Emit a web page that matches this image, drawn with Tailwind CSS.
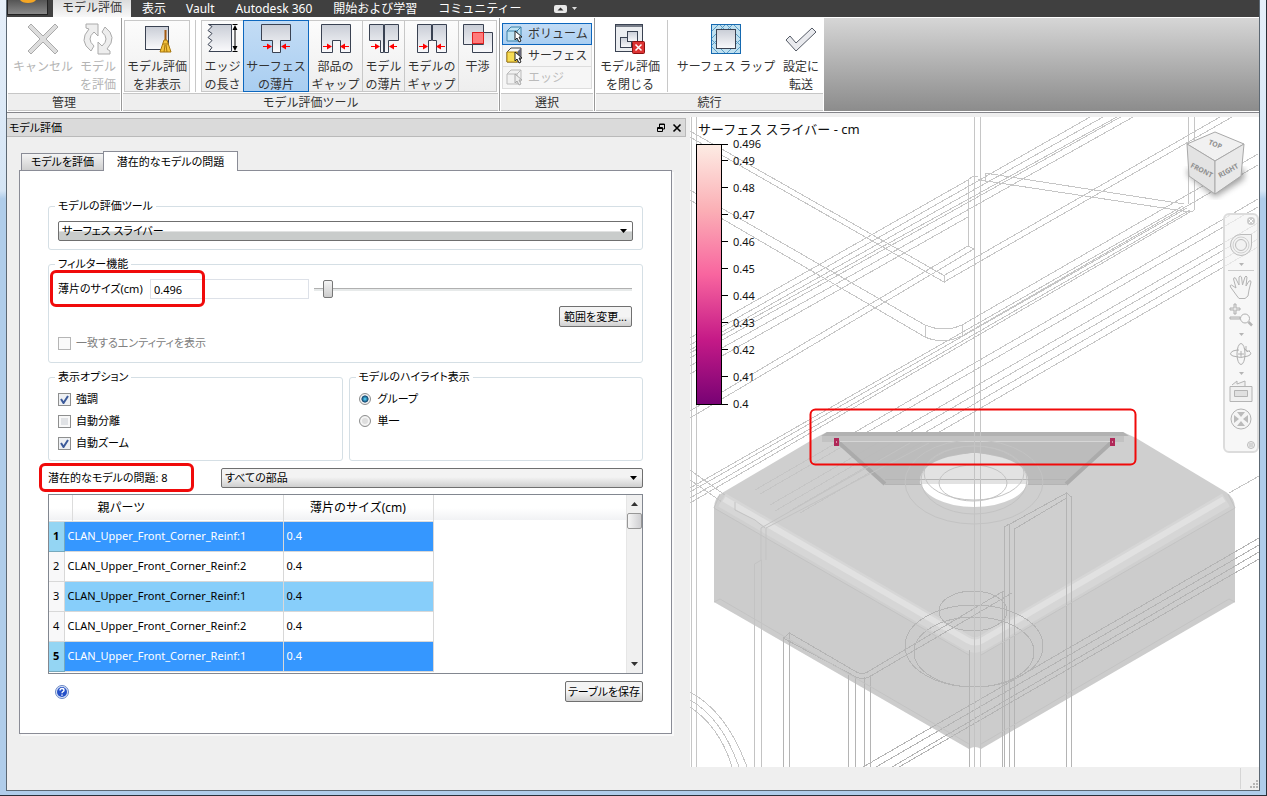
<!DOCTYPE html>
<html lang="ja">
<head>
    <meta charset="UTF-8">
    <meta name="viewport" content="width=device-width, initial-scale=1.0">
    <title>モデル評価</title>
    <script src="https://cdn.jsdelivr.net/npm/@tailwindcss/browser@4"></script>
</head>
<body class="h-screen overflow-hidden font-['Noto_Sans','Noto_Sans_CJK_JP',sans-serif] text-xs text-black">
<div class="flex h-screen border-r border-b border-[#2a2f38] bg-linear-to-b from-[#e6eff9] from-0% via-[#d5e5f5] via-24% to-[#b0cdea] to-25% pr-[6px] pb-[4px] pl-[6px]">
<div class="flex min-w-0 flex-1 flex-col border-x border-b border-[#5c6873] bg-[#efefef]">

    <!-- メニュー -->
    <nav class="flex h-[17px] shrink-0 items-center bg-[#404040] leading-4 text-white">
        <button aria-label="アプリケーション メニュー" class="flex h-[15px] w-[41px] justify-center self-start border border-t-0 border-[#222] bg-linear-to-b from-[#555] to-[#8a8a8a]">
            <svg width="18" height="3" viewBox="0 0 18 3"><path d="M1 0h16q-2 3-8 3T1 0z" fill="#f5a623"/></svg>
        </button>
        <a href="#" class="ml-[5px] h-[17px] w-[78px] bg-linear-to-b from-[#dcdcdc] to-[#f8f8f8] text-center text-[#333]">モデル評価</a>
        <a href="#" class="ml-[11px]">表示</a>
        <a href="#" class="ml-5">Vault</a>
        <a href="#" class="ml-[21px]">Autodesk 360</a>
        <a href="#" class="ml-[21px]">開始および学習</a>
        <a href="#" class="ml-[21px]">コミュニティー</a>
        <button aria-label="リボンを最小化" class="ml-8 flex items-center gap-[5px]">
            <svg width="13" height="8" viewBox="0 0 13 8"><rect width="13" height="8" rx="2" fill="#e8e8e8"/><path d="M3.500 5.500h6l-3-3z" fill="#333"/></svg>
            <svg width="5" height="3" viewBox="0 0 5 3"><path d="M0 0h5L2.500 3z" fill="#ddd"/></svg>
        </button>
    </nav>

    <!-- リボン -->
    <div class="flex h-[96px] shrink-0 border-t border-b border-t-white border-b-[#85858a] bg-white pb-px leading-[18px] text-[#333]">
        <section class="flex w-[115px] flex-col border-r border-[#999] pr-px pl-px">
            <div class="flex h-[75px] shrink-0 pt-[2px] text-[#b4b4b4]">
                <button disabled class="flex w-[70px] flex-col items-center pt-[3px]">
                    <svg class="mb-[3px] h-8 w-8 shrink-0" viewBox="0 0 32 32"><path d="M4 1l12 12L28 1l3 3-12 12 12 12-3 3-12-12L4 31l-3-3 12-12L1 4z" fill="#ddd" stroke="#aaa" stroke-linejoin="round"/></svg>
                    キャンセル
                </button>
                <button disabled class="flex w-[40px] flex-col items-center pt-[3px]">
                    <svg class="mb-[3px] h-8 w-8 shrink-0" viewBox="0 0 32 32"><path d="M4 1h12v12l-4-4q-8 7 0 14l-3 5Q-4 18 7 6L4 5zM28 31H16V19l4 4q8-7 0-14l3-5q13 10 2 22l3 2z" fill="#eee" stroke="#aaa" stroke-linejoin="round"/></svg>
                    <span>モデル<br>を評価</span>
                </button>
            </div>
            <h2 class="h-[18px] border-y border-[#c6c6c6] bg-[#eee] text-center">管理</h2>
        </section>
        <section class="flex w-[378px] flex-col border-r border-[#999] px-px">
            <div class="flex h-[75px] shrink-0 pt-[2px] pb-px">
                <button class="ml-px flex w-[66px] flex-col items-center border border-[#c8c8c8] bg-linear-to-b from-[#fcfcfc] to-[#eee] pt-[2px]">
                    <svg class="mb-[3px] h-8 w-8 shrink-0" viewBox="0 0 32 32"><defs><linearGradient id="g" x1="0" y1="0" x2="0" y2="1"><stop stop-color="#c9cdd6"/><stop offset="1" stop-color="#fafafc"/></linearGradient></defs><rect x="4.500" y="3.500" width="23" height="23" fill="url(#g)" stroke="#3a4252"/><path d="M23.500 7h2v11h-2z" fill="#a55a10"/><path d="M23 17h3l4 12H19z" fill="#f4c23a" stroke="#a6750d"/><path d="M22 21h5M23 29l1-7M26 29l-1-7" stroke="#a6750d" fill="none"/></svg>
                    <span>モデル評価<br>を非表示</span>
                </button>
                <div class="mr-[5px] ml-[5px] w-px bg-[#c8c8c8]"></div>
                <button class="flex w-[42px] flex-col items-center border border-r-0 border-[#c8c8c8] bg-linear-to-b from-[#fcfcfc] to-[#eee] pt-[2px]">
                    <svg class="mb-[3px] h-8 w-8 shrink-0" viewBox="0 0 32 32"><path d="M1.500 1.500h23v27H2l3-4-4-3 4-4-4-3 4-4-4-3 4-4z" fill="url(#g)" stroke="#3a4252"/><path d="M25.500 1.500h5M25.500 28.500h5M28 4v22" stroke="#000" fill="none"/><path d="M25.500 7L28 2l2.500 5zM25.500 23l2.500 5 2.500-5z"/></svg>
                    <span>エッジ<br>の長さ</span>
                </button>
                <button class="flex w-[66px] flex-col items-center border border-[#0d67be] bg-linear-to-b from-[#c3dcf5] to-[#a9cef1] pt-[2px]">
                    <svg class="mb-[3px] h-8 w-8 shrink-0" viewBox="0 0 32 32"><path d="M1.500 1.500h29v16h-10v12h-8v-12h-11z" fill="url(#g)" stroke="#3a4252" stroke-linejoin="round"/><path d="M3 23.500h6M30 23.500h-6" stroke="#f00"/><path d="M7 20.500l5 3-5 3zM26 20.500l-5 3 5 3z" fill="#f00"/></svg>
                    <span>サーフェス<br>の薄片</span>
                </button>
                <button class="flex w-[54px] flex-col items-center border border-l-0 border-[#c8c8c8] bg-linear-to-b from-[#fcfcfc] to-[#eee] pt-[2px]">
                    <svg class="mb-[3px] h-8 w-8 shrink-0" viewBox="0 0 32 32"><path d="M1.500 1.500h29v28h-10v-12h-8v12h-11z" fill="url(#g)" stroke="#3a4252" stroke-linejoin="round"/><path d="M3 23.500h6M29 23.500h-6" stroke="#f00"/><path d="M7 20.500l5 3-5 3zM25 20.500l-5 3 5 3z" fill="#f00"/></svg>
                    <span>部品の<br>ギャップ</span>
                </button>
                <button class="flex w-[42px] flex-col items-center border border-l-0 border-[#c8c8c8] bg-linear-to-b from-[#fcfcfc] to-[#eee] pt-[2px]">
                    <svg class="mb-[3px] h-8 w-8 shrink-0" viewBox="0 0 32 32"><path d="M1.500 1.500h14v28h-3v-12h-11zM16.500 1.500h14v16h-10v12h-4z" fill="url(#g)" stroke="#3a4252" stroke-linejoin="round"/><path d="M3 23.500h6M29 23.500h-6" stroke="#f00"/><path d="M7 20.500l5 3-5 3zM26 20.500l-5 3 5 3z" fill="#f00"/></svg>
                    <span>モデル<br>の薄片</span>
                </button>
                <button class="flex w-[54px] flex-col items-center border border-l-0 border-[#c8c8c8] bg-linear-to-b from-[#fcfcfc] to-[#eee] pt-[2px]">
                    <svg class="mb-[3px] h-8 w-8 shrink-0" viewBox="0 0 32 32"><path d="M1.500 1.500h14v16h-3v12h-11zM16.500 1.500h14v28h-10v-12h-4z" fill="url(#g)" stroke="#3a4252" stroke-linejoin="round"/><path d="M3 23.500h6M29 23.500h-6" stroke="#f00"/><path d="M7 20.500l5 3-5 3zM25 20.500l-5 3 5 3z" fill="#f00"/></svg>
                    <span>モデルの<br>ギャップ</span>
                </button>
                <button class="flex w-[38px] flex-col items-center border border-l-0 border-[#c8c8c8] bg-linear-to-b from-[#fcfcfc] to-[#eee] pt-[2px]">
                    <svg class="mb-[3px] h-8 w-8 shrink-0" viewBox="0 0 32 32"><path d="M1.500 1.500h20v20h-20zM10.500 9.500h20v20h-20z" fill="url(#g)" stroke="#3a4252"/><path d="M10.500 9.500h11v11h-11z" fill="#ff7b7b" stroke="#e02020"/></svg>
                    干渉
                </button>
            </div>
            <h2 class="h-[18px] border-y border-[#c6c6c6] bg-[#eee] text-center">モデル評価ツール</h2>
        </section>
        <section class="flex w-[95px] flex-col border-r border-[#999] px-px">
            <div class="flex h-[75px] shrink-0 flex-col pt-[5px] pr-px pl-px">
                <button class="flex h-[22px] items-center gap-[5px] border border-[#0d67be] bg-linear-to-b from-[#c3dcf5] to-[#a9cef1] pl-[3px]">
                    <svg width="17" height="17" viewBox="0 0 17 17"><path d="M1 5l4-4h10v11l-3 3H1z" fill="#bfe3f3" stroke="#3a80a8"/><path d="M1 5h10v10M11 5l4-4" stroke="#3a80a8" fill="none"/><path d="M9 5v9l2-2 2 4 2-1-2-4h3z" fill="#fff" stroke="#222"/></svg>
                    ボリューム
                </button>
                <button class="flex h-[22px] items-center gap-[5px] border border-t-0 border-[#ddd] bg-[#f6f6f6] pl-[3px]">
                    <svg width="17" height="17" viewBox="0 0 17 17"><path d="M1 5l4-4h10v11l-3 3H1z" fill="#f7f7f7" stroke="#444"/><path d="M11 5l4-4v10l-4 4z" fill="#667"/><path d="M1 5h10v10H1z" fill="#f6dc55" stroke="#b58a10"/><path d="M9 5v9l2-2 2 4 2-1-2-4h3z" fill="#fff" stroke="#222"/></svg>
                    サーフェス
                </button>
                <button disabled class="flex h-[22px] items-center gap-[5px] border border-t-0 border-[#ddd] bg-[#f6f6f6] pl-[3px] text-[#bbb]">
                    <svg width="17" height="17" viewBox="0 0 17 17" stroke="#bbb"><path d="M1 5l4-4h10v11l-3 3H1z" fill="#f1f1f1"/><path d="M1 5h10v10M11 5l4-4" fill="none"/><path d="M9 5v9l2-2 2 4 2-1-2-4h3z" fill="#eee" stroke="#aaa"/></svg>
                    エッジ
                </button>
            </div>
            <h2 class="h-[18px] border-y border-[#c6c6c6] bg-[#eee] text-center">選択</h2>
        </section>
        <section class="flex w-[229px] flex-col px-px">
            <div class="flex h-[75px] shrink-0 pt-[2px] pb-px">
                <button class="flex w-[68px] flex-col items-center pt-[3px]">
                    <svg class="mb-[3px] h-8 w-8 shrink-0" viewBox="0 0 32 32"><rect x="1.500" y="1.500" width="27" height="27" fill="#eceef1" stroke="#3a4252"/><path d="M2 2h26v2H2z" fill="#777d88"/><rect x="6.500" y="14.500" width="11" height="10" fill="url(#g)" stroke="#3a4252"/><rect x="13.500" y="8.500" width="10" height="10" fill="url(#g)" stroke="#3a4252"/><rect x="18.500" y="18.500" width="12" height="12" rx="1" fill="#d33" stroke="#8b1010"/><path d="M21.500 21.500l6 6M27.500 21.500l-6 6" stroke="#fff" stroke-width="1.500"/></svg>
                    <span>モデル評価<br>を閉じる</span>
                </button>
                <div class="ml-[3px] w-px bg-[#c8c8c8]"></div>
                <button class="ml-[7px] flex w-[102px] flex-col items-center pt-[3px]">
                    <svg class="mb-[3px] h-8 w-8 shrink-0" viewBox="0 0 32 32"><rect x="1" y="1" width="30" height="30" fill="#bfe0f0"/><path d="M1 9l8-8 22 22-8 8M9 31l-8-8L23 1l8 8M1 16L16 1l15 15-15 15z" stroke="#5a9cc5" fill="none"/><rect x="1.500" y="1.500" width="29" height="29" fill="none" stroke="#1569b0"/><rect x="6.500" y="6.500" width="19" height="19" fill="url(#g)" stroke="#3a4252"/></svg>
                    サーフェス ラップ
                </button>
                <button class="ml-1 flex w-[40px] flex-col items-center pt-[3px]">
                    <svg class="mb-[3px] h-8 w-8 shrink-0" viewBox="0 0 32 32"><path d="M1 17l4-4 6 7L27 5l4 4-20 19z" fill="#e9eaee" stroke="#555b66" stroke-linejoin="round"/></svg>
                    <span>設定に<br>転送</span>
                </button>
            </div>
            <h2 class="h-[18px] border-y border-[#c6c6c6] bg-[#eee] text-center">続行</h2>
        </section>
        <div class="flex-1 bg-linear-to-b from-[#d6d6d6] to-[#8c8c8c]"></div>
    </div>

    <div class="flex min-h-0 flex-1">
        <!-- モデル評価パネル -->
        <aside class="w-[683px] shrink-0 pt-[5px] pr-1 text-[11px] [font-feature-settings:'palt']">
            <header class="flex h-[19px] items-center border border-l-0 border-[#b9b9b9] bg-[#dadada] pr-[3px] pl-[2px] leading-4">
                <h1 class="flex-1">モデル評価</h1>
                <button aria-label="フロート" class="mr-[6px]"><svg width="10" height="10" viewBox="0 0 10 10" fill="none" stroke="#000"><path d="M3.500 4V1h5v5H6M3 1.500h6M1.500 4.500h5v4h-5zM1 5.500h6"/></svg></button>
                <button aria-label="閉じる"><svg width="10" height="10" viewBox="0 0 10 10"><path d="M1.500 1.500l7 7M8.500 1.500l-7 7" stroke="#000" stroke-width="1.600"/></svg></button>
            </header>
            <div class="pt-[14px] pr-[14px] pl-[12px]">
                <div role="tablist" class="flex items-end pl-[2px] leading-4">
                    <button role="tab" aria-selected="false" class="h-[17px] w-[82px] border border-r-0 border-b-0 border-[#8a8c96] bg-linear-to-b from-[#f4f4f4] to-[#cfcfcf]">モデルを評価</button>
                    <button role="tab" aria-selected="true" class="relative -mb-px h-5 w-[135px] border border-b-0 border-[#8a8c96] bg-white">潜在的なモデルの問題</button>
                </div>
                <div class="border border-[#8a8c96] bg-white px-[28px] pt-[27px] pb-[31px] shadow-[2px_2px_0_#f9f9f9]">
                    <fieldset class="rounded-[3px] border border-[#d5dfe5] px-[9px] pt-[7px] pb-2">
                        <legend class="-ml-[3px] px-[3px] leading-4"><label for="tool">モデルの評価ツール</label></legend>
                        <div class="relative">
                            <select id="tool" class="block h-5 w-full appearance-none rounded-xs border border-[#6f6f6f] bg-linear-to-b from-white from-50% to-[#c9cccb] to-55% pl-[3px] leading-4"><option>サーフェス スライバー</option></select>
                            <svg class="pointer-events-none absolute top-2 right-[6px]" width="7" height="4" viewBox="0 0 7 4"><path d="M0 0h7L3.500 4z"/></svg>
                        </div>
                    </fieldset>
                    <fieldset class="mt-[6px] rounded-[3px] border border-[#d5dfe5] pt-[7px] pr-[10px] pb-[11px] pl-[9px]">
                        <legend class="-ml-[3px] px-[3px] leading-4">フィルター機能</legend>
                        <div class="relative flex h-5 items-center">
                            <label for="size" class="w-[92px] whitespace-nowrap">薄片のサイズ(cm)</label>
                            <input id="size" type="text" value="0.496" class="h-5 w-[159px] border border-[#dde1e8] pl-[3px]">
                            <input type="range" aria-label="薄片のサイズ" min="0" max="100" value="3" class="ml-[5px] h-[18px] min-w-0 flex-1 appearance-none bg-transparent [&::-webkit-slider-runnable-track]:h-[3px] [&::-webkit-slider-runnable-track]:border-t [&::-webkit-slider-runnable-track]:border-[#b0b0b0] [&::-webkit-slider-runnable-track]:bg-[#e7eaea] [&::-webkit-slider-thumb]:-mt-[9px] [&::-webkit-slider-thumb]:h-[18px] [&::-webkit-slider-thumb]:w-[10px] [&::-webkit-slider-thumb]:appearance-none [&::-webkit-slider-thumb]:rounded-xs [&::-webkit-slider-thumb]:border [&::-webkit-slider-thumb]:border-[#777] [&::-webkit-slider-thumb]:bg-linear-to-b [&::-webkit-slider-thumb]:from-[#f5f5f5] [&::-webkit-slider-thumb]:to-[#ccc]">
                            <div class="pointer-events-none absolute -top-[9px] -left-2 h-[37px] w-[155px] rounded-md border-3 border-[#f00a0a]"></div>
                        </div>
                        <div class="mt-[7px] flex justify-end">
                            <button class="h-[21px] w-[73px] rounded-xs border border-[#707070] bg-linear-to-b from-[#f4f4f4] from-50% to-[#d0d0d0] leading-4 whitespace-nowrap">範囲を変更...</button>
                        </div>
                        <label class="mt-2 flex h-4 items-center gap-[5px] text-[#808080]"><input type="checkbox" disabled class="h-[13px] w-[13px] appearance-none border border-[#b5b5b5] bg-[#fafafa]">一致するエンティティを表示</label>
                    </fieldset>
                    <div class="mt-[6px] grid grid-cols-2 gap-[6px]">
                        <fieldset class="rounded-[3px] border border-[#d5dfe5] px-[9px] pt-[3px] pb-[6px]">
                            <legend class="-ml-[3px] px-[3px] leading-4">表示オプション</legend>
                            <label class="relative flex h-[22px] items-center gap-[5px]"><input type="checkbox" checked class="peer h-[13px] w-[13px] appearance-none border border-[#8e8f8f] bg-[#eef0f3]"><svg class="pointer-events-none absolute left-[2px] hidden peer-checked:block" width="9" height="9" viewBox="0 0 9 9"><path d="M1 4l2.500 4L8 1" stroke="#3b5a9a" stroke-width="2" fill="none"/></svg>強調</label>
                            <label class="relative flex h-[22px] items-center gap-[5px]"><input type="checkbox" class="peer h-[13px] w-[13px] appearance-none border border-[#8e8f8f] bg-[#e0e2e5] shadow-[inset_0_0_0_2px_#f8f8f8]"><svg class="pointer-events-none absolute left-[2px] hidden peer-checked:block" width="9" height="9" viewBox="0 0 9 9"><path d="M1 4l2.500 4L8 1" stroke="#3b5a9a" stroke-width="2" fill="none"/></svg>自動分離</label>
                            <label class="relative flex h-[22px] items-center gap-[5px]"><input type="checkbox" checked class="peer h-[13px] w-[13px] appearance-none border border-[#8e8f8f] bg-[#eef0f3]"><svg class="pointer-events-none absolute left-[2px] hidden peer-checked:block" width="9" height="9" viewBox="0 0 9 9"><path d="M1 4l2.500 4L8 1" stroke="#3b5a9a" stroke-width="2" fill="none"/></svg>自動ズーム</label>
                        </fieldset>
                        <fieldset class="rounded-[3px] border border-[#d5dfe5] px-[9px] pt-[3px] pb-[6px]">
                            <legend class="-ml-[3px] px-[3px] leading-4">モデルのハイライト表示</legend>
                            <label class="flex h-[22px] items-center gap-[7px]"><input type="radio" name="highlight" checked class="h-3 w-3 appearance-none rounded-full border border-[#8e8f8f] bg-[#f2f2f2] checked:bg-radial checked:from-[#4cc0e8] checked:from-10% checked:via-[#12466e] checked:via-45% checked:to-[#f2f2f2] checked:to-55%">グループ</label>
                            <label class="flex h-[22px] items-center gap-[7px]"><input type="radio" name="highlight" class="h-3 w-3 appearance-none rounded-full border border-[#8e8f8f] bg-[#dedede] shadow-[inset_0_0_0_2px_#f4f4f4] checked:bg-[#12466e]">単一</label>
                        </fieldset>
                    </div>
                    <div class="relative mt-[7px] flex h-5 items-center">
                        <label for="parts" class="w-[173px] shrink-0 whitespace-nowrap">潜在的なモデルの問題: 8</label>
                        <select id="parts" class="h-5 min-w-0 flex-1 appearance-none rounded-xs border border-[#6f6f6f] bg-linear-to-b from-[#f3f3f3] from-45% to-[#cfcfcf] pl-[3px] leading-4"><option>すべての部品</option></select>
                        <svg class="pointer-events-none absolute top-2 right-[6px]" width="7" height="4" viewBox="0 0 7 4"><path d="M0 0h7L3.500 4z"/></svg>
                        <div class="pointer-events-none absolute -top-[5px] -left-[9px] h-[29px] w-[155px] rounded-md border-3 border-[#f00a0a]"></div>
                    </div>
                    <div class="mt-[6px] flex h-[180px] border border-[#828790] [font-feature-settings:normal]">
                        <div class="flex-1 overflow-hidden bg-linear-to-b from-white from-[13px] to-[#f1f2f4] to-[25px] bg-size-[100%_25px] bg-no-repeat">
                            <table class="table-fixed border-collapse leading-4">
                                <colgroup><col class="w-[15px]"><col class="w-[8px]"><col class="w-[211px]"><col class="w-[150px]"></colgroup>
                                <thead class="text-xs leading-4"><tr class="h-[26px]">
                                    <th colspan="2" class="border-r border-b border-[#dcdcdc]"></th>
                                    <th class="border-r border-b border-[#dcdcdc] pl-[25px] text-left font-normal">親パーツ</th>
                                    <th class="border-r border-b border-[#dcdcdc] font-normal">薄片のサイズ(cm)</th>
                                </tr></thead>
                                <tbody>
                                    <tr class="h-[30px] bg-[#3597ff] text-white"><th class="border border-l-0 border-[#76a9bd] bg-[#94d5f3] text-black">1</th><td colspan="2" class="border border-dotted border-[#d08040] pl-[3px]">CLAN_Upper_Front_Corner_Reinf:1</td><td class="border border-[#d8d8d8] pl-[3px]">0.4</td></tr>
                                    <tr class="h-[30px]"><th class="border border-l-0 border-[#d8d8d8] bg-[#f8f8f9] font-normal">2</th><td colspan="2" class="border border-[#d8d8d8] pl-[3px]">CLAN_Upper_Front_Corner_Reinf:2</td><td class="border border-[#d8d8d8] pl-[3px]">0.4</td></tr>
                                    <tr class="h-[30px] bg-[#87cefa]"><th class="border border-l-0 border-[#d8d8d8] bg-[#f8f8f9] font-normal">3</th><td colspan="2" class="border border-[#d8d8d8] pl-[3px]">CLAN_Upper_Front_Corner_Reinf:1</td><td class="border border-[#d8d8d8] pl-[3px]">0.4</td></tr>
                                    <tr class="h-[30px]"><th class="border border-l-0 border-[#d8d8d8] bg-[#f8f8f9] font-normal">4</th><td colspan="2" class="border border-[#d8d8d8] pl-[3px]">CLAN_Upper_Front_Corner_Reinf:2</td><td class="border border-[#d8d8d8] pl-[3px]">0.4</td></tr>
                                    <tr class="h-[30px] bg-[#3597ff] text-white"><th class="border border-l-0 border-[#76a9bd] bg-[#94d5f3] text-black">5</th><td colspan="2" class="border border-[#d8d8d8] pl-[3px]">CLAN_Upper_Front_Corner_Reinf:1</td><td class="border border-[#d8d8d8] pl-[3px]">0.4</td></tr>
                                </tbody>
                            </table>
                        </div>
                        <div class="flex w-4 flex-col items-center border-l border-[#e6e6e6] bg-[#f0f0f0]">
                            <svg class="my-[7px] shrink-0" width="7" height="4" viewBox="0 0 7 4"><path d="M0 4h7L3.500 0z" fill="#333"/></svg>
                            <div class="h-4 w-[15px] shrink-0 rounded-xs border border-[#979797] bg-linear-to-r from-[#f6f6f6] to-[#cfcfd2]"></div>
                            <svg class="mt-auto mb-[7px] shrink-0" width="7" height="4" viewBox="0 0 7 4"><path d="M0 0h7L3.500 4z" fill="#333"/></svg>
                        </div>
                    </div>
                    <div class="mt-[7px] flex items-center justify-between pl-[7px]">
                        <button aria-label="ヘルプ"><svg width="14" height="14" viewBox="0 0 14 14"><circle cx="7" cy="7" r="6.500" fill="#dbe5f7" stroke="#6b87c4"/><circle cx="7" cy="7" r="5" fill="#2450c8"/><path d="M5 5.500q0-2 2-2t2 1.700q0 1-1 1.500t-1 1.500M7 9.500v1.300" stroke="#fff" stroke-width="1.400" fill="none"/></svg></button>
                        <button class="h-[21px] w-[78px] rounded-xs border border-[#707070] bg-linear-to-b from-[#f4f4f4] from-50% to-[#d0d0d0] leading-4 whitespace-nowrap">テーブルを保存</button>
                    </div>
                </div>
            </div>
        </aside>

        <!-- 3D ビュー -->
        <main class="relative mt-1 mb-[23px] min-w-0 flex-1 overflow-hidden bg-white">
            <svg class="block h-full w-full" viewBox="690 117 569 650" preserveAspectRatio="xMinYMin slice" fill="none">
                <defs>
                    <linearGradient id="scale" x1="0" y1="0" x2="0" y2="1"><stop stop-color="#fdece4"/><stop offset=".25" stop-color="#fbb0b6"/><stop offset=".5" stop-color="#f8659f"/><stop offset=".75" stop-color="#c51a87"/><stop offset="1" stop-color="#770274"/></linearGradient>
                    <filter id="soft"><feGaussianBlur stdDeviation="3"/></filter>
                </defs>
                <!-- ワイヤーフレーム -->
                <g stroke="#c6c6c6" shape-rendering="crispEdges">
                    <path d="M691 117v650M696.500 117v650M974.500 117v315M980.500 117v315M968.500 180v66M1188.500 117v87M1194.500 117v91"/>
                    <path d="M690 131l254 144.500v6.500L690 137M944 275.500L1220 117M944 282l288-165"/>
                    <path d="M690 190l235 135q19 8 37 0v11q-19 9-37 1L690 200M925 325v12M962 325l296-171M962 336l296-171"/>
                    <path d="M690 338l278-158 5-4h5M690 345L1097 113M690 350l413-233M690 353l427-236M690 358l443-248M690 366l443-249M690 374l278-157"/>
                    <path d="M690 411l278-165 6 3L690 418"/>
                    <path d="M985 173l199 31M986 181l204 31q5 0 5-6M985 173v8l-7-2"/>
                    <path d="M690 488l493-282M690 492l497-284M690 498l500-288M690 503l500-291"/>
                    <path d="M755 490l503-291M760 494l498-287M770 505l488-282M775 511l483-281M790 511l468-272M800 513l458-266"/>
                    <path d="M690 470l74 53M690 480l70 48M1229 493l30-17"/>
                    <path d="M690 692q37 20 57 75M690 700q32 18 49 67M690 707q30 20 42 60"/>
                </g>
                <!-- 部品 -->
                <path fill-rule="evenodd" d="M827 432h296l13 6 90 54q9 6 9 16v94L981 749q-6-4-12 0L714 602v-94q0-10 8-15l95-56zM920.500 480a53.500 27 0 1 0 107 0a53.500 27 0 1 0-107 0z" fill="#c4c4c4" fill-opacity=".82"/>
                <path d="M714 508L969 655v94L714 602zM981 655l254-147v94L981 749z" fill="#bbb" fill-opacity=".15"/>
                <path d="M722 500l244 142q9 6 18 0l242-142" stroke="#d6d6d6" stroke-width="15"/>
                <path d="M724 499l243 141q8 5 16 0l241-141" stroke="#e1e1e1" stroke-width="6"/>
                <path d="M837 440h276l-47 44h-38q0-24-54-31q-54 7-54 31H885z" fill="#b9b9b9" fill-opacity=".9"/>
                <path d="M920 484q-3-26 54-31 57 5 54 31z" fill="#e2e2e2"/>
                <path d="M827 432h296l6 4H821z" fill="#b2b2b2"/>
                <path d="M822 436h302v6H822z" fill="#c2c2c2"/>
                <path d="M837 441l48 43M1113 441l-47 43" stroke="#ababab" stroke-width="4"/>
                <path d="M840 441.500h270" stroke="#d6d6d6" stroke-width="1"/>
                <g stroke="#b4b4b4" shape-rendering="crispEdges">
                    <path d="M885 479.500h181M885 484.500h36M1028 484.500h38"/>
                    <path d="M969.500 650v117M1004.500 767V527l62-34 5 4v270M1009.500 767V525M1014.500 767V529l52-31M1004 527l5-3M1066.500 493v274M1002.500 591v176"/>
                    <path d="M783.500 767V638l6-5 67 39q5 3 11 0l136-81M789.500 767V633M783 638l73 39q7 3 13 0l143-84M848.500 675v92M855.500 677v90M864.500 677v90M870.500 675v92"/>
                    <path d="M863 767l396-229M876 767l383-222M892 767l367-215M899 767l360-208"/>
                    <ellipse cx="973" cy="611" rx="34" ry="20"/><ellipse cx="974" cy="646" rx="69" ry="41"/><ellipse cx="974" cy="652" rx="60" ry="35"/>
                </g>
                <g stroke="#c3c3c3">
                    <path d="M974.500 432v335M980.500 432v335"/>
                    <ellipse cx="974" cy="482" rx="69" ry="42"/><ellipse cx="974" cy="480" rx="53" ry="34"/><ellipse cx="973" cy="483" rx="34" ry="18"/><ellipse cx="974" cy="473" rx="50" ry="27"/>
                    <path d="M754.500 767V564l7-4v207M766 560V528L929 443M761 560V528L910 443M735 502v8l20 10 10 8M720 494l-6 14 255 147M1228 494l7 14-254 147M714 602l6-3 249 145M1235 602l-6-3-248 145"/>
                </g>
                <path d="M834 438h5v8h-5zM1110 438h5v8h-5z" fill="#b02858"/>
                <path d="M836.500 441v2M1112.500 441v2" stroke="#d890a8"/>
                <!-- 凡例 -->
                <text x="698" y="134" font-size="13" fill="#111">サーフェス スライバー - cm</text>
                <rect x="696.500" y="144.500" width="25" height="260" fill="url(#scale)" stroke="#000"/>
                <path d="M721 144.500h7M721 160.500h7M721 187.500h7M721 214.500h7M721 241.500h7M721 268.500h7M721 295.500h7M721 322.500h7M721 349.500h7M721 376.500h7M721 404.500h7" stroke="#000"/>
                <g font-size="11" fill="#111">
                    <text x="733" y="148">0.496</text><text x="733" y="165">0.49</text><text x="733" y="192">0.48</text><text x="733" y="219">0.47</text><text x="733" y="246">0.46</text><text x="733" y="273">0.45</text><text x="733" y="300">0.44</text><text x="733" y="327">0.43</text><text x="733" y="354">0.42</text><text x="733" y="381">0.41</text><text x="733" y="408">0.4</text>
                </g>
                <!-- ビューキューブ -->
                <path d="M1188 175l27 22 29-18v-10h-56z" fill="#777" filter="url(#soft)" opacity=".7"/>
                <g stroke="#a9a9a9" stroke-linejoin="round"><path d="M1187 144l28-12 29 12-29 17z" fill="#f1f1f1"/><path d="M1187 144l28 17v33l-26-18z" fill="#e3e3e3"/><path d="M1244 144l-29 17v33l26-18z" fill="#e9e9e9"/></g>
                <g font-size="7" font-weight="bold" fill="#8f8f8f"><text transform="translate(1208 144) rotate(22)">TOP</text><text transform="translate(1190 167) rotate(27)">FRONT</text><text transform="translate(1220 178) rotate(-29)">RIGHT</text></g>
                <rect x="810.500" y="409.500" width="325" height="55" rx="5" stroke="#f00a0a" stroke-width="2"/>
            </svg>
            <!-- ナビゲーション バー -->
            <nav class="absolute top-[96px] right-0 flex h-[240px] w-[36px] flex-col items-center rounded-md border-2 border-[#dcdcdc] bg-[#f4f4f4]/70">
                <button aria-label="閉じる" class="mt-[2px] mr-[2px] self-end"><svg width="8" height="8" viewBox="0 0 8 8"><circle cx="4" cy="4" r="4" fill="#ccc"/><path d="M2 2l4 4M6 2L2 6" stroke="#fff"/></svg></button>
                <button aria-label="ステアリング ホイール" class="mt-[8px]"><svg width="24" height="24" viewBox="0 0 24 24" fill="#f2f2f2" stroke="#bcbcbc"><path d="M12 1.500h10.500V12A10.500 10.500 0 1 1 12 1.500z"/><circle cx="12" cy="12" r="8" stroke="#d0d0d0"/><circle cx="12" cy="12" r="5.500"/></svg></button>
                <svg class="mt-[6px] shrink-0" width="5" height="3"><path d="M0 0h5L2.500 3z" fill="#b5b5b5"/></svg>
                <div class="mt-[4px] h-px w-[26px] shrink-0 bg-[#ccc]"></div>
                <button aria-label="画面移動" class="mt-[4px]"><svg width="24" height="24" viewBox="0 0 24 24"><path d="M8 21l-6.500-9q-1-2 1-2l4.500 3-2.500-9q0-2 2-1l3.500 7V2q1-2 2.500 0l1 8 2.500-8q1-2 2 0l-1 9 3-5q2-1 2 1l-2 8-1 6-3 2.500H10z" fill="#f5f5f5" stroke="#b4b4b4"/></svg></button>
                <button aria-label="ズーム" class="mt-[4px]"><svg width="24" height="24" viewBox="0 0 24 24"><path d="M5 1h2v4h4v2H7v4H5V7H1V5h4zM1 14h10v2H1z" fill="#e8e8e8" stroke="#b0b0b0"/><circle cx="16" cy="15.500" r="4.500" fill="#f8f8f8" stroke="#b0b0b0"/><path d="M19.500 19l3.500 3.500" stroke="#b5b5b5" stroke-width="2.500"/></svg></button>
                <svg class="mt-[6px] shrink-0" width="5" height="3"><path d="M0 0h5L2.500 3z" fill="#b5b5b5"/></svg>
                <button aria-label="オービット" class="mt-[6px]"><svg width="24" height="24" viewBox="0 0 24 24" fill="none" stroke="#b0b0b0"><ellipse cx="12" cy="12" rx="4" ry="10.500"/><path d="M20 9q4 3-1 5-7 3-15 0-5-2 0-5 3-1 6-1M12 9v6M9 12h6M17 4v5h4M15 6l4 4"/></svg></button>
                <svg class="mt-[6px] shrink-0" width="5" height="3"><path d="M0 0h5L2.500 3z" fill="#b5b5b5"/></svg>
                <button aria-label="正面を表示" class="mt-[4px]"><svg width="24" height="24" viewBox="0 0 24 24" fill="#f0f0f0" stroke="#b4b4b4"><path d="M3 6l5-4v3l8-3v5M1 7.500h22v15H1z"/><path d="M5.500 11.500h13v6h-13z" fill="#e0e0e0"/></svg></button>
                <button aria-label="全体表示" class="mt-[5px]"><svg width="22" height="22" viewBox="0 0 22 22"><circle cx="11" cy="11" r="10" fill="#f5f5f5" stroke="#b4b4b4"/><path d="M7 4h8l-4 5zM7 18h8l-4-5zM4 7v8l5-4zM18 7v8l-5-4z" fill="#bbb"/></svg></button>
                <button aria-label="カスタマイズ" class="mt-auto mr-[2px] mb-[2px] self-end"><svg width="8" height="8" viewBox="0 0 8 8"><circle cx="4" cy="4" r="3.500" fill="#eee" stroke="#bbb"/><path d="M2 3h4M2 5h4" stroke="#bbb"/></svg></button>
            </nav>
        </main>
    </div>
    <footer class="-mt-[23px] flex h-[23px] shrink-0 items-end justify-end">
        <div class="mb-px h-[21px] w-[19px] border-l border-[#d5d5d5] pt-[12px] pl-[9px]">
            <svg width="8" height="8" viewBox="0 0 8 8" fill="#b5b5b5"><path d="M6 0h2v2H6zM3 3h2v2H3zM6 3h2v2H6zM0 6h2v2H0zM3 6h2v2H3zM6 6h2v2H6z"/></svg>
        </div>
    </footer>
</div>
</div>
</body>
</html>
